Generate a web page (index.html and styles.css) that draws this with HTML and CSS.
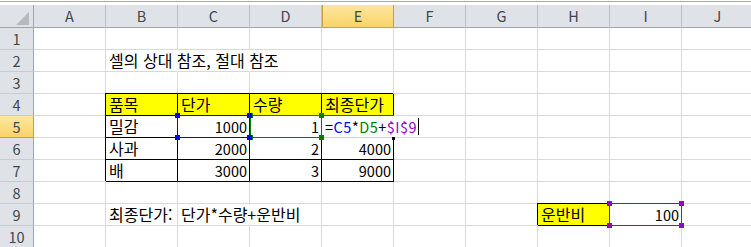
FILE: index.html
```html
<!DOCTYPE html>
<html lang="ko">
<head>
  <meta charset="UTF-8">
  <title>셀의 상대 참조, 절대 참조</title>
  <link rel="stylesheet" href="styles.css">
</head>
<body>
  <div class="bar"></div>

  <div class="sheet">
    <!-- column headers -->
    <div class="corner">
      <svg width="13" height="13" viewBox="0 0 13 13"><polygon points="13,0 13,13 0,13" fill="#b6babf"/></svg>
    </div>
    <div class="hd">A</div>
    <div class="hd">B</div>
    <div class="hd">C</div>
    <div class="hd">D</div>
    <div class="hd sel">E</div>
    <div class="hd">F</div>
    <div class="hd">G</div>
    <div class="hd">H</div>
    <div class="hd">I</div>
    <div class="hd">J</div>

    <!-- 1 -->
    <div class="rh">1</div>
    <div class="c"></div><div class="c"></div><div class="c"></div><div class="c"></div><div class="c"></div>
    <div class="c"></div><div class="c"></div><div class="c"></div><div class="c"></div><div class="c"></div>

    <!-- 2 -->
    <div class="rh">2</div>
    <div class="c"></div>
    <div class="c ko spill over">셀의 상대 참조, 절대 참조</div>
    <div class="c spill"></div>
    <div class="c"></div><div class="c"></div><div class="c"></div><div class="c"></div><div class="c"></div><div class="c"></div><div class="c"></div>

    <!-- 3 -->
    <div class="rh">3</div>
    <div class="c"></div><div class="c"></div><div class="c"></div><div class="c"></div><div class="c"></div>
    <div class="c"></div><div class="c"></div><div class="c"></div><div class="c"></div><div class="c"></div>

    <!-- 4 -->
    <div class="rh">4</div>
    <div class="c"></div>
    <div class="c ko tb yl">품목</div>
    <div class="c ko tb yl">단가</div>
    <div class="c ko tb yl">수량</div>
    <div class="c ko tb yl">최종단가</div>
    <div class="c"></div><div class="c"></div><div class="c"></div><div class="c"></div><div class="c"></div>

    <!-- 5 -->
    <div class="rh sel">5</div>
    <div class="c"></div>
    <div class="c ko tb">밀감</div>
    <div class="c tb num anchor">1000
      <div class="ref blue"><i class="tl"></i><i class="tr"></i><i class="bl"></i><i class="br"></i></div>
    </div>
    <div class="c tb num anchor">1
      <div class="ref green"><i class="tl"></i><i class="tr"></i><i class="bl"></i><i class="br"></i></div>
    </div>
    <div class="c tb anchor">
      <div class="edit">=<span class="r-blue">C5</span>*<span class="r-green">D5</span>+<span class="r-purple">$I$9</span><span class="caret"></span></div>
      <i class="handle"></i>
    </div>
    <div class="c"></div><div class="c"></div><div class="c"></div><div class="c"></div><div class="c"></div>

    <!-- 6 -->
    <div class="rh">6</div>
    <div class="c"></div>
    <div class="c ko tb">사과</div>
    <div class="c tb num">2000</div>
    <div class="c tb num">2</div>
    <div class="c tb num">4000</div>
    <div class="c"></div><div class="c"></div><div class="c"></div><div class="c"></div><div class="c"></div>

    <!-- 7 -->
    <div class="rh">7</div>
    <div class="c"></div>
    <div class="c ko tb">배</div>
    <div class="c tb num">3000</div>
    <div class="c tb num">3</div>
    <div class="c tb num">9000</div>
    <div class="c"></div><div class="c"></div><div class="c"></div><div class="c"></div><div class="c"></div>

    <!-- 8 -->
    <div class="rh">8</div>
    <div class="c"></div><div class="c"></div><div class="c"></div><div class="c"></div><div class="c"></div>
    <div class="c"></div><div class="c"></div><div class="c"></div><div class="c"></div><div class="c"></div>

    <!-- 9 -->
    <div class="rh">9</div>
    <div class="c"></div>
    <div class="c ko">최종단가:</div>
    <div class="c ko spill over">단가*수량+운반비</div>
    <div class="c"></div><div class="c"></div><div class="c"></div><div class="c"></div>
    <div class="c ko tb yl">운반비</div>
    <div class="c num anchor">100
      <div class="ref purple"><i class="tl"></i><i class="tr"></i><i class="bl"></i><i class="br"></i></div>
    </div>
    <div class="c"></div>

    <!-- 10 -->
    <div class="rh">10</div>
    <div class="c"></div><div class="c"></div><div class="c"></div><div class="c"></div><div class="c"></div>
    <div class="c"></div><div class="c"></div><div class="c"></div><div class="c"></div><div class="c"></div>
  </div>
</body>
</html>
```

FILE: styles.css
```css
body {
  margin: 0;
  background: #fff;
  font-family: "Noto Sans CJK KR", "Noto Sans", sans-serif;
  font-size: 14.5px;
  overflow: hidden;
}
.bar {
  height: 3px;
  border-top: 1px solid #a9a9a9;
  margin-top: 1px;
  width: 760px;
}
.sheet {
  display: grid;
  grid-template-columns: 34px repeat(10, 72px);
  grid-template-rows: 23px repeat(10, 22px);
  width: 754px;
}
.sheet > div {
  box-sizing: border-box;
  white-space: nowrap;
}
.corner {
  background: #dfe3e8;
  border-right: 1px solid #9ea5ad;
  border-bottom: 1px solid #9ea5ad;
  display: flex;
  align-items: flex-end;
  justify-content: flex-end;
  padding: 0 4px 2px 0;
}
.corner svg {
  display: block;
}
.hd {
  background: #dfe3e8;
  border-right: 1px solid #bcc1c7;
  border-bottom: 1px solid #9ea5ad;
  color: #3e4650;
  text-align: center;
  line-height: 22px;
}
.hd.sel {
  background: linear-gradient(#fde69e, #fbd46a);
  border: 1px solid #c6a23e;
  border-top: none;
  line-height: 22px;
}
.rh {
  background: #dfe3e8;
  border-right: 1px solid #9ea5ad;
  border-bottom: 1px solid #c6cbd1;
  color: #3e4650;
  text-align: center;
  line-height: 21px;
}
.rh.sel {
  background: linear-gradient(#fde69e, #fbd46a);
  border-bottom-color: #c6a23e;
  border-right-color: #c6a23e;
}
.c {
  border-right: 1px solid #d9d9d9;
  border-bottom: 1px solid #d9d9d9;
  background: #fff;
  color: #000;
  line-height: 21px;
  padding: 0 3px;
}
.c.ko {
  font-size: 16px;
}
.c.anchor {
  position: relative;
}
/* text running on into the next cells hides their gridlines */
.c.spill {
  border-right-color: transparent;
}
.c.over {
  position: relative;
  z-index: 1;
}
.c.tb {
  border-right-color: #000;
  border-bottom-color: #000;
  box-shadow: -1px -1px 0 #000;
}
.c.yl {
  background: #ffff00;
}
.c.num {
  text-align: right;
  padding-right: 2px;
}

/* reference range outlines */
.ref {
  position: absolute;
  z-index: 3;
  left: -1px;
  top: -1px;
  right: -1px;
  bottom: -1px;
  border: 1px solid;
}
.ref i {
  position: absolute;
  width: 5px;
  height: 5px;
  background: currentColor;
}
.ref .tl { left: -3px; top: -3px; }
.ref .tr { right: -3px; top: -3px; }
.ref .bl { left: -3px; bottom: -3px; }
.ref .br { right: -3px; bottom: -3px; }
.ref.blue { color: #0000ff; border-color: #0000ff; z-index: 4; }
.ref.green { color: #008000; border-color: #008000; left: 0; }
.ref.purple { color: #9900cc; border-color: #9900cc; }

/* cell in edit mode */
.edit {
  position: absolute;
  z-index: 2;
  left: -1px;
  top: -1px;
  right: -1px;
  bottom: -1px;
  background: #fff;
  border-left: 1px solid #ff80ff;
  border-top: 1px solid #2b3fcf;
  border-bottom: 1px solid #cfcfcf;
  padding: 0 0 0 3px;
  line-height: 21px;
  letter-spacing: 0.5px;
  display: flex;
  align-items: center;
}
.r-blue { color: #0000ff; }
.r-green { color: #008000; }
.r-purple { color: #9900cc; }
.caret {
  display: inline-block;
  width: 0;
  height: 17px;
  border-left: 1px solid #000;
  margin-left: 1px;
}
.handle {
  position: absolute;
  z-index: 2;
  right: -2px;
  bottom: -3px;
  width: 3px;
  height: 3px;
  background: #000;
}
```
